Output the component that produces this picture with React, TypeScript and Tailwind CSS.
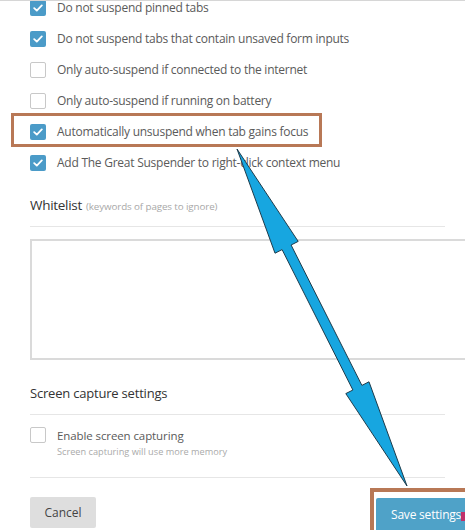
import React from 'react';

const options = [
  { label: 'Do not suspend pinned tabs', checked: true },
  { label: 'Do not suspend tabs that contain unsaved form inputs', checked: true },
  { label: 'Only auto-suspend if connected to the internet', checked: false },
  { label: 'Only auto-suspend if running on battery', checked: false },
  { label: 'Automatically unsuspend when tab gains focus', checked: true },
  { label: 'Add The Great Suspender to right-click context menu', checked: true },
];

const Checkbox = ({ checked }: { checked: boolean }) =>
  checked ? (
    <span className="flex h-4 w-4 shrink-0 items-center justify-center rounded-[2px] bg-[#4b9bc8]">
      <svg width="10" height="8" viewBox="0 0 10 8" fill="none">
        <path d="M1.2 4.2 L3.8 6.6 L8.8 1.4" stroke="white" strokeWidth="1.8" strokeLinecap="round" strokeLinejoin="round" />
      </svg>
    </span>
  ) : (
    <span className="h-4 w-4 shrink-0 rounded-[2px] border border-[#c8c8c8] bg-white" />
  );

export default function App() {
  return (
    <div
      className="relative h-[530px] w-[465px] overflow-hidden border-t border-[#d6d6d6] bg-white"
      style={{ fontFamily: '"Open Sans", "Noto Sans", sans-serif' }}
    >
      <div className="w-[445px] pl-[30px]">
        {/* General options */}
        <div className="mt-[-9px]">
          {options.map((o) => (
            <div key={o.label} className="flex h-[31px] items-center gap-[11px]">
              <Checkbox checked={o.checked} />
              <span className="whitespace-nowrap text-[12px] tracking-[-0.25px] text-[#5a5a5a]">{o.label}</span>
            </div>
          ))}
        </div>

        {/* Whitelist */}
        <div className="mt-[16px] border-b border-[#e6e6e6] pb-[9px] leading-[20px]">
          <span className="text-[13.5px] tracking-[-0.3px] text-[#333]">Whitelist</span>
          <span className="ml-1 text-[9.8px] tracking-[-0.1px] text-[#a8a8a8]">(keywords of pages to ignore)</span>
        </div>
        <div className="mt-[12px] h-[121px] w-[460px] border-2 border-[#dadada] bg-white" />

        {/* Screen capture */}
        <div className="mt-[23px] border-b border-[#e6e6e6] pb-[11px] text-[13px] leading-[20px] tracking-[-0.2px] text-[#333]">
          Screen capture settings
        </div>
        <div className="flex items-start gap-[11px] border-b border-[#e6e6e6] pb-[18px] pt-[12px]">
          <Checkbox checked={false} />
          <div>
            <div className="text-[11.5px] leading-[18px] tracking-[-0.1px] text-[#5a5a5a]">Enable screen capturing</div>
            <div className="text-[9.2px] leading-[14px] text-[#aaa]">Screen capturing will use more memory</div>
          </div>
        </div>

        {/* Actions */}
        <div className="mt-[19px] flex items-start justify-between">
          <button className="h-[31px] w-[66px] rounded-[2px] bg-[#dedede] text-[12px] text-[#444]">Cancel</button>
          <button className="mr-[-31px] mt-[1px] h-[34px] w-[100px] rounded-[2px] bg-[#4fa2c8] pl-[15px] text-left text-[12px] tracking-[-0.2px] text-white">
            Save settings
          </button>
        </div>
      </div>

      {/* Annotation overlays */}
      <div className="pointer-events-none absolute left-[11px] top-[112px] h-[34px] w-[311px] border-[3px] border-[#b87856]" />
      <div className="pointer-events-none absolute left-[370px] top-[487px] h-[60px] w-[110px] border-4 border-[#b87856]" />
      <div className="pointer-events-none absolute left-[461px] top-[511px] h-[9px] w-[6px] bg-[#c0306a]" />
      <svg className="pointer-events-none absolute left-0 top-0" width="465" height="530">
        <polygon
          points="237,148 298.2,240.4 291.1,244 361.9,384.4 369,380.8 407,485 345.8,392.6 352.9,389 282.1,248.6 275,252.2"
          fill="#17a6e0"
          stroke="#1d3b4b"
          strokeWidth="1"
          strokeLinejoin="miter"
        />
      </svg>
    </div>
  );
}
